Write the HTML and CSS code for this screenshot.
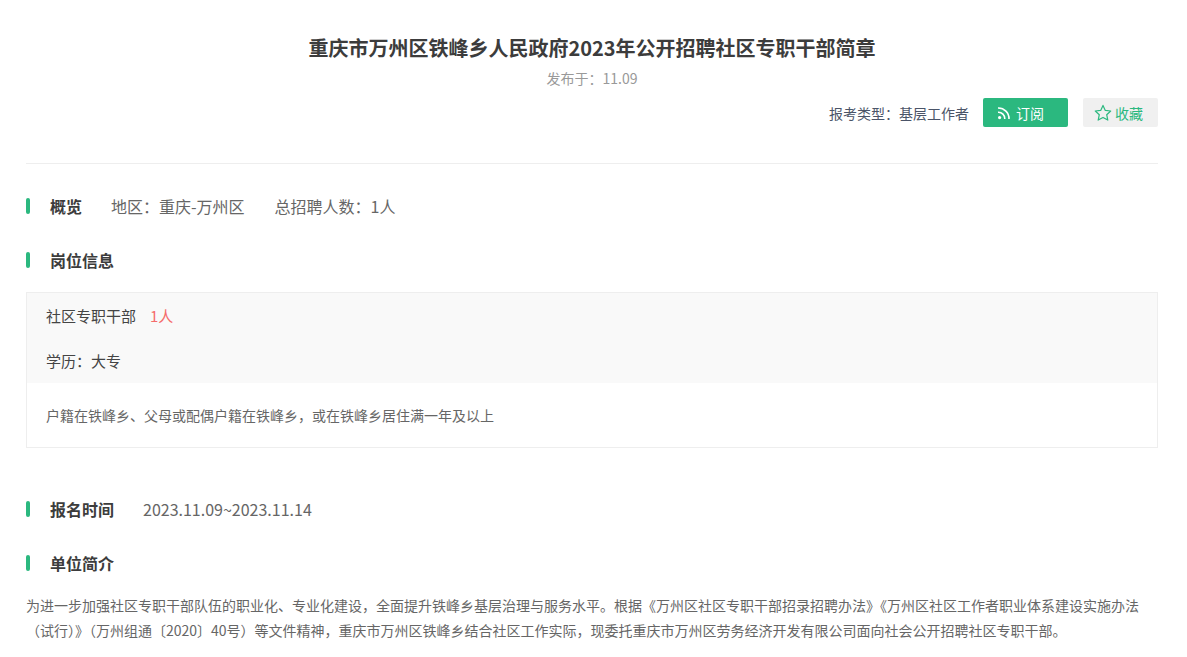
FILE: index.html
```html
<!DOCTYPE html>
<html lang="zh-CN">
<head>
    <meta charset="UTF-8">
    <meta name="viewport" content="width=device-width, initial-scale=1.0">
    <title>重庆市万州区铁峰乡人民政府2023年公开招聘社区专职干部简章</title>
    <link rel="stylesheet" href="styles.css">
</head>
<body>
    <div class="container">
        <div class="header">
            <h1>重庆市万州区铁峰乡人民政府2023年公开招聘社区专职干部简章</h1>
            <div class="publish-time">发布于：11.09</div>
            <div class="actions">
                <span class="exam-type">报考类型：基层工作者</span>
                <button class="btn subscribe-btn">
                    <svg class="icon" viewBox="0 0 14 14" width="14" height="14">
                        <circle cx="2.6" cy="11.6" r="1.6" fill="#fff"/>
                        <path d="M1 6.2a6.4 6.4 0 0 1 6.8 6.8M1 2a10.6 10.6 0 0 1 11 11" fill="none" stroke="#fff" stroke-width="1.6"/>
                    </svg>
                    订阅
                </button>
                <button class="btn collect-btn">
                    <svg class="icon" viewBox="0 0 18 18" width="18" height="18">
                        <path d="M9 1.4l2.3 5 5.4.6-4 3.7 1.1 5.4L9 13.4l-4.8 2.7 1.1-5.4-4-3.7 5.4-.6z" fill="none" stroke="#2bb87f" stroke-width="1.2" stroke-linejoin="round"/>
                    </svg>
                    收藏
                </button>
            </div>
        </div>

        <div class="section-row overview">
            <h2 class="section-title">概览</h2>
            <span class="info">地区：重庆-万州区</span>
            <span class="info">总招聘人数：1人</span>
        </div>

        <div class="section-row jobs-title">
            <h2 class="section-title">岗位信息</h2>
        </div>

        <div class="job-card">
            <div class="job-top">
                <div class="job-name">社区专职干部<span class="job-count">1人</span></div>
                <div class="job-edu">学历：大专</div>
            </div>
            <div class="job-desc">户籍在铁峰乡、父母或配偶户籍在铁峰乡，或在铁峰乡居住满一年及以上</div>
        </div>

        <div class="section-row signup">
            <h2 class="section-title">报名时间</h2>
            <span class="info">2023.11.09~2023.11.14</span>
        </div>

        <div class="section-row intro-title">
            <h2 class="section-title">单位简介</h2>
        </div>

        <p class="intro">为进一步加强社区专职干部队伍的职业化、专业化建设，全面提升铁峰乡基层治理与服务水平。根据《万州区社区专职干部招录招聘办法》《万州区社区工作者职业体系建设实施办法（试行）》（万州组通〔2020〕40号）等文件精神，重庆市万州区铁峰乡结合社区工作实际，现委托重庆市万州区劳务经济开发有限公司面向社会公开招聘社区专职干部。</p>
    </div>
</body>
</html>
```

FILE: styles.css
```css
* {
    box-sizing: border-box;
    margin: 0;
    padding: 0;
}

body {
    font-family: "Noto Sans CJK SC", "Open Sans", sans-serif;
    background: #fff;
    color: #333;
    overflow: hidden;
}

.container {
    padding: 0 29px 0 26px;
}

.header {
    padding-top: 33px;
    height: 164px;
    border-bottom: 1px solid #eee;
    text-align: center;
}

h1 {
    font-size: 20px;
    line-height: 30px;
    font-weight: 700;
    color: #3c3c3c;
}

.publish-time {
    margin-top: 5px;
    font-size: 14px;
    line-height: 20px;
    color: #999;
}

.actions {
    display: flex;
    justify-content: flex-end;
    align-items: center;
    margin-top: 10px;
}

.exam-type {
    font-size: 14px;
    color: #4a5468;
    margin-right: 14px;
}

.btn {
    display: flex;
    align-items: center;
    height: 29px;
    border: none;
    border-radius: 2px;
    font-family: inherit;
    font-size: 14px;
    cursor: pointer;
}

.subscribe-btn {
    width: 85px;
    padding-left: 14px;
    gap: 5px;
    background: #2bb87f;
    color: #fff;
    margin-right: 15px;
}

.collect-btn {
    width: 75px;
    padding-left: 11px;
    gap: 3px;
    background: #f0f0f0;
    color: #2bb87f;
}

.section-row {
    display: flex;
    align-items: center;
    height: 24px;
}

.section-title {
    position: relative;
    font-size: 16px;
    font-weight: 700;
    color: #3c3c3c;
    padding-left: 24px;
}

.section-title::before {
    content: '';
    position: absolute;
    left: 0;
    top: 50%;
    width: 4px;
    height: 16px;
    margin-top: -8px;
    border-radius: 2px;
    background: #2bb87f;
}

.info {
    font-size: 16px;
    color: #666;
}

.overview {
    margin-top: 30px;
}

.overview .section-title {
    margin-right: 29px;
}

.overview .info {
    margin-right: 30px;
}

.jobs-title {
    margin-top: 30px;
}

.job-card {
    margin-top: 20px;
    border: 1px solid #eee;
}

.job-top {
    background: #f9f9f9;
    padding: 0 19px;
    height: 90px;
    font-size: 15px;
    color: #444;
}

.job-name {
    line-height: 46px;
}

.job-count {
    margin-left: 14px;
    color: #f56c6c;
}

.job-edu {
    line-height: 44px;
}

.job-desc {
    padding: 0 19px;
    height: 64px;
    line-height: 64px;
    font-size: 14px;
    color: #666;
}

.signup {
    margin-top: 49px;
}

.signup .section-title {
    margin-right: 29px;
}

.intro-title {
    margin-top: 30px;
}

.intro {
    margin-top: 18px;
    font-size: 14px;
    line-height: 25px;
    color: #666;
}
```
